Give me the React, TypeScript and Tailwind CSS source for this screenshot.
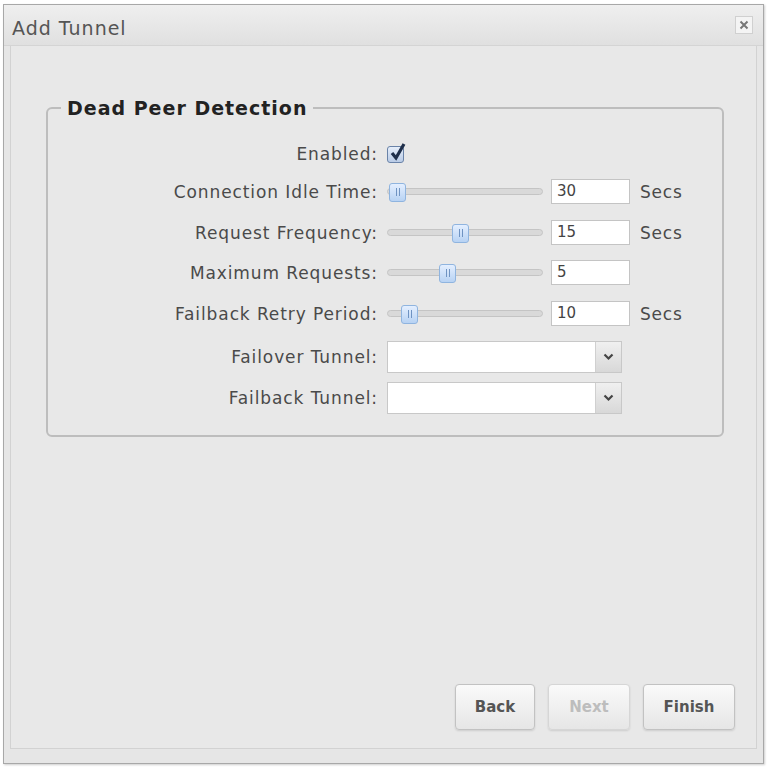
import React from "react";

const font = { fontFamily: '"DejaVu Sans", Verdana, sans-serif' };

function Slider({ pos }: { pos: number }) {
  return (
    <div className="relative h-[24px] w-[156px] flex items-center">
      <div className="h-[7px] w-full rounded-full border border-[#c4c4c4] bg-[#d9d9d9]" />
      <div
        className="absolute top-[3px] h-[19px] w-[17px] rounded-[3px] border border-[#8fb4df] bg-gradient-to-b from-[#e4efff] to-[#b7d2f3] flex items-center justify-center"
        style={{ left: pos }}
      >
        <div className="flex gap-[2px]">
          <div className="h-[8px] w-[1px] bg-[#6f93c2]" />
          <div className="h-[8px] w-[1px] bg-[#6f93c2]" />
        </div>
      </div>
    </div>
  );
}

function Row({ label, children }: { label: string; children: React.ReactNode }) {
  return (
    <div className="flex items-center">
      <div className="w-[339px] text-right pr-[9px] text-[17px] leading-[24px] tracking-[0.9px] text-[#4a4a4a]">{label}</div>
      {children}
    </div>
  );
}

function NumInput({ v, secs }: { v: string; secs?: boolean }) {
  return (
    <>
      <div className="ml-[8px] h-[25px] w-[79px] border border-[#c4c4c4] bg-white pl-[5px] text-[15px] text-[#444] leading-[23px]">
        {v}
      </div>
      {secs && <div className="ml-[10px] text-[17px] leading-[24px] tracking-[0.8px] text-[#4a4a4a]">Secs</div>}
    </>
  );
}

function Select() {
  return (
    <div className="flex h-[32px] w-[235px] border border-[#c8c8c8] bg-white">
      <div className="flex-1" />
      <div className="w-[26px] border-l border-[#d0d0d0] bg-gradient-to-b from-[#f0f0f0] to-[#d8d8d8] flex items-center justify-center">
        <svg width="11" height="8" viewBox="0 0 11 8">
          <path d="M1.5 1.5 L5.5 5.5 L9.5 1.5" fill="none" stroke="#444" strokeWidth="2.2" />
        </svg>
      </div>
    </div>
  );
}

function Btn({ label, w, disabled }: { label: string; w: number; disabled?: boolean }) {
  return (
    <div
      className={`h-[46px] rounded-[4px] border flex items-center justify-center text-[15px] font-bold bg-gradient-to-b from-[#fafafa] to-[#e6e6e6] shadow-[0_1px_2px_rgba(0,0,0,0.12)] ${
        disabled ? "border-[#d6d6d6] text-[#bdbdbd]" : "border-[#c2c2c2] text-[#555]"
      }`}
      style={{ width: w }}
    >
      {label}
    </div>
  );
}

export default function App() {
  return (
    <div className="h-[768px] w-[767px] bg-white pt-[4px] px-[3px]" style={font}>
      <div className="h-[760px] w-[761px] border border-[#a8a8a8] bg-[#e6e6e6] flex flex-col shadow-[1px_1px_2px_rgba(0,0,0,0.2)]">
        <div className="h-[41px] flex items-center justify-between pl-[8px] pr-[10px] bg-gradient-to-b from-[#efefef] to-[#e0e0e0] border-b border-[#d4d4d4]">
          <div className="pt-[6px] text-[19px] tracking-[1px] text-[#555]">Add Tunnel</div>
          <div className="h-[18px] w-[18px] border border-[#d0d0d0] bg-[#f4f4f4] flex items-center justify-center">
            <svg width="10" height="10" viewBox="0 0 10 10">
              <path d="M1.5 1.5 L8.5 8.5 M8.5 1.5 L1.5 8.5" stroke="#777" strokeWidth="2" />
            </svg>
          </div>
        </div>
        <div className="flex-1 mx-[6px] mb-[14px] border-x border-b border-[#d2d2d2] bg-[#e8e8e8] flex flex-col">
          <div className="pt-[61px] pl-[35px]">
            <div className="relative w-[678px] h-[330px] rounded-[6px] border-2 border-[#bdbdbd]">
              <div className="absolute -top-[15px] left-[13px] bg-[#e8e8e8] px-[6px] text-[19px] tracking-[1px] font-bold text-[#222]">
                Dead Peer Detection
              </div>
              <div className="pt-[33px] flex flex-col">
                <Row label="Enabled:">
                  <div className="relative h-[17px] w-[17px] rounded-[3px] border border-[#6a83a8] bg-gradient-to-b from-[#e6eefa] to-[#b9cbe6]">
                    <svg className="absolute -top-[5px] left-[1px]" width="18" height="20" viewBox="0 0 18 20">
                      <path d="M3 11 L7 16 L15 2" fill="none" stroke="#1f2f4a" strokeWidth="3.2" />
                    </svg>
                  </div>
                </Row>
                <div className="h-[13px]" />
                <Row label="Connection Idle Time:">
                  <Slider pos={2} />
                  <NumInput v="30" secs />
                </Row>
                <div className="h-[16px]" />
                <Row label="Request Frequency:">
                  <Slider pos={65} />
                  <NumInput v="15" secs />
                </Row>
                <div className="h-[15px]" />
                <Row label="Maximum Requests:">
                  <Slider pos={52} />
                  <NumInput v="5" />
                </Row>
                <div className="h-[16px]" />
                <Row label="Failback Retry Period:">
                  <Slider pos={14} />
                  <NumInput v="10" secs />
                </Row>
                <div className="h-[15px]" />
                <Row label="Failover Tunnel:">
                  <Select />
                </Row>
                <div className="h-[9px]" />
                <Row label="Failback Tunnel:">
                  <Select />
                </Row>
              </div>
            </div>
          </div>
          <div className="flex-1" />
          <div className="flex justify-end gap-[13px] pr-[21px] pb-[18px]">
            <Btn label="Back" w={80} />
            <Btn label="Next" w={82} disabled />
            <Btn label="Finish" w={92} />
          </div>
        </div>
      </div>
    </div>
  );
}
